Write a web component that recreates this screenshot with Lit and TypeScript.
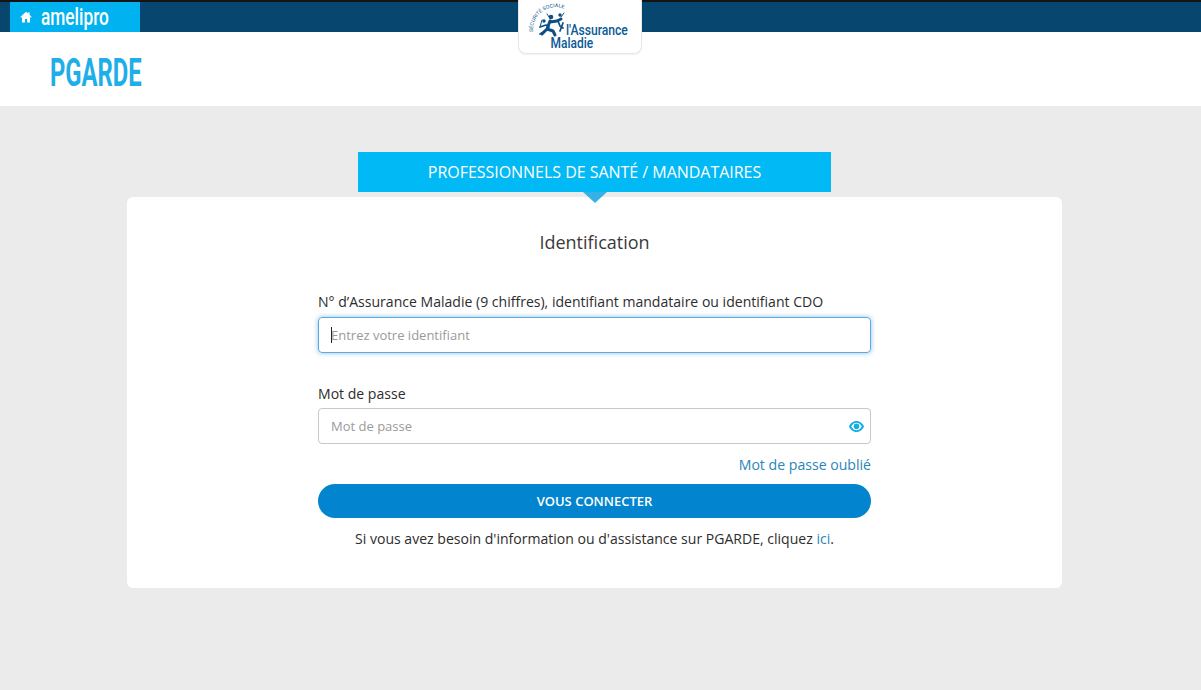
import { LitElement, html, css, svg } from "lit";
import { customElement } from "lit/decorators.js";

@customElement("app-root")
export class AppRoot extends LitElement {
  static styles = css`
    :host {
      display: block;
      min-height: 690px;
      background: #ebebeb;
      font-family: "Open Sans", "Liberation Sans", sans-serif;
      color: #2f2f2f;
      position: relative;
      overflow: hidden;
    }
    .topbar {
      height: 30px;
      background: #07466f;
      border-top: 2px solid #141414;
      padding-left: 10px;
    }
    .tab {
      width: 130px;
      height: 30px;
      background: #00b2ef;
      display: flex;
      align-items: center;
      color: #fff;
      box-sizing: border-box;
      padding-left: 10px;
      gap: 9px;
    }
    .tab svg { width: 12px; height: 12px; flex: none; }
    .tab span {
      font-family: "Roboto", sans-serif;
      font-size: 24px;
      line-height: 30px;
      font-weight: 500;
      display: inline-block;
      transform: scaleX(0.72);
      transform-origin: left center;
      white-space: nowrap;
    }
    .brand {
      height: 74px;
      box-sizing: border-box;
      background: #fff;
      display: flex;
      align-items: center;
      padding: 8px 0 0 50px;
    }
    .brand span {
      font-family: "Roboto", sans-serif;
      font-size: 39px;
      line-height: 66px;
      font-weight: 700;
      color: #1eaee8;
      display: inline-block;
      transform: scaleX(0.61);
      transform-origin: left center;
    }
    .logo {
      position: absolute;
      left: 518px;
      top: 0;
      width: 124px;
      height: 54px;
      background: #fff;
      border: 1px solid #e6e6e6;
      border-top: none;
      border-radius: 0 0 8px 8px;
      box-sizing: border-box;
      box-shadow: 0 1px 2px rgba(0, 0, 0, 0.06);
    }
    .logo svg { display: block; width: 122px; height: 53px; }
    .logo text { font-family: "Roboto", sans-serif; font-weight: 500; fill: #0c5a96; }
    .main {
      display: flex;
      flex-direction: column;
      align-items: center;
      padding-top: 46px;
      width: 1189px;
    }
    .banner {
      width: 473px;
      height: 40px;
      background: #00b9f5;
      color: #fff;
      font-size: 16px;
      line-height: 40px;
      text-align: center;
      position: relative;
      letter-spacing: -0.03px;
    }
    .banner::after {
      content: "";
      position: absolute;
      left: 225px;
      top: 40px;
      border-style: solid;
      border-width: 11px 12px 0 12px;
      border-color: #35b1e6 transparent transparent transparent;
      z-index: 2;
    }
    .card {
      margin-top: 5px;
      width: 935px;
      height: 391px;
      box-sizing: border-box;
      background: #fff;
      border-radius: 6px;
      padding: 31px 191px 0;
      position: relative;
    }
    h1 {
      margin: 0 0 36px;
      font-size: 18px;
      line-height: 28px;
      font-weight: 400;
      text-align: center;
      color: #3a3a3a;
    }
    label {
      display: block;
      font-size: 14.05px;
      line-height: 20px;
      color: #2d2d2d;
      margin-bottom: 5px;
    }
    label.tight { margin-bottom: 4px; }
    .input {
      height: 36px;
      box-sizing: border-box;
      border: 1px solid #c8c8c8;
      border-radius: 4px;
      display: flex;
      align-items: center;
      padding-left: 12px;
      font-size: 13px;
      color: #9a9a9a;
      position: relative;
    }
    .input.focus {
      border-color: #5fa9dc;
      box-shadow: 0 0 5px rgba(70, 160, 220, 0.65);
    }
    .caret { width: 1px; height: 16px; background: #222; margin-right: -1px; }
    .gap { height: 31px; }
    .eye { position: absolute; right: 6px; top: 11px; width: 15px; height: 13px; }
    .forgot {
      display: block;
      text-align: right;
      font-size: 14.1px;
      line-height: 20px;
      color: #2a85b8;
      margin-top: 11px;
    }
    .btn {
      margin-top: 9px;
      height: 34px;
      border-radius: 17px;
      background: #0285ce;
      color: #fff;
      font-size: 13px;
      font-weight: 600;
      display: flex;
      align-items: center;
      justify-content: center;
    }
    .help {
      margin: 11px -20px 0;
      text-align: center;
      font-size: 14.05px;
      line-height: 20px;
      color: #2d2d2d;
    }
    .help a { color: #2a85b8; }
  `;

  render() {
    return html`
      <div class="topbar">
        <div class="tab">
          <svg viewBox="0 0 12 12"><path fill="#fff" d="M6 .8 .3 6l.7.8 1-.9V11.4h3V8h2v3.4h3V5.9l1 .9.7-.8L9.6 3.8V1.3H8.2v1.2z"/></svg>
          <span>amelipro</span>
        </div>
      </div>
      <div class="brand"><span>PGARDE</span></div>
      <div class="logo">
        <svg viewBox="0 0 122 53">
          <defs><path id="arc" d="M14 32 A 23 23 0 0 1 48 10"/></defs>
          <text font-size="5" style="font-weight:400"><textPath href="#arc" textLength="46" lengthAdjust="spacingAndGlyphs">SÉCURITÉ SOCIALE</textPath></text>
          ${svg`<g fill="#0c4f86" stroke="#0c4f86" stroke-linecap="round" stroke-linejoin="round">
            <circle cx="32" cy="17" r="2.300" stroke="none"/>
            <circle cx="41" cy="15" r="1.700" stroke="none"/>
            <circle cx="25" cy="21" r="1.700" stroke="none"/>
            <path fill="none" stroke-width="3" d="M31 21 28 29l-5 5M28 29l6 2 2 4M31 22l7-1 4-2"/>
            <path fill="none" stroke-width="1.700" d="M21 27l6-2 3 2M39 21l2 5 3 2M21 34l5-3M44 23l-3 8"/>
            <path fill="none" stroke-width="1" d="M23 20l-2 7M45 13l-3 4M28 14l2 3"/>
          </g>`}
          <text transform="translate(47 34.500) scale(.81 1)" font-size="15">l'Assurance</text>
          <text transform="translate(31.500 47.500) scale(.8 1)" font-size="15">Maladie</text>
        </svg>
      </div>
      <div class="main">
        <div class="banner">PROFESSIONNELS DE SANTÉ / MANDATAIRES</div>
        <div class="card">
          <h1>Identification</h1>
          <label>N° d’Assurance Maladie (9 chiffres), identifiant mandataire ou identifiant CDO</label>
          <div class="input focus"><span class="caret"></span>Entrez votre identifiant</div>
          <div class="gap"></div>
          <label class="tight">Mot de passe</label>
          <div class="input">Mot de passe
            <svg class="eye" viewBox="0 0 15 13"><path fill="#14aee6" fill-rule="evenodd" d="M7.500 1C4 1 1.300 3.400 0 6.500 1.300 9.600 4 12 7.500 12s6.200-2.400 7.500-5.500C13.700 3.400 11 1 7.500 1zM7.500 2.700c2.300 0 4.100 1.600 5.200 3.800-1.100 2.200-2.900 3.800-5.200 3.800S3.400 8.700 2.300 6.500c1.100-2.200 2.900-3.800 5.200-3.800z"/><circle cx="7.500" cy="6.300" r="2.800" fill="#14aee6"/></svg>
          </div>
          <a class="forgot">Mot de passe oublié</a>
          <div class="btn">VOUS CONNECTER</div>
          <div class="help">Si vous avez besoin d'information ou d'assistance sur PGARDE, cliquez <a>ici</a>.</div>
        </div>
      </div>
    `;
  }
}
